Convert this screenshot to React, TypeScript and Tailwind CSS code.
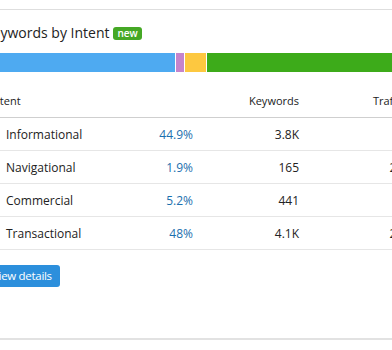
import React from "react";

const rows = [
  { label: "Informational", pct: "44.9%", kw: "3.8K", tr: "58" },
  { label: "Navigational", pct: "1.9%", kw: "165", tr: "217" },
  { label: "Commercial", pct: "5.2%", kw: "441", tr: "96" },
  { label: "Transactional", pct: "48%", kw: "4.1K", tr: "248" },
];

export default function App() {
  return (
    <div
      className="w-[392px] h-[350px] overflow-hidden bg-white pt-[9px] text-[#222]"
      style={{ fontFamily: '"Open Sans", "Noto Sans", sans-serif' }}
    >
      <div className="ml-[-40px] w-[470px] border-t border-[#dedede] border-b-2 border-b-[#e2e2e2] pl-[24px] pr-[20px] pt-[13px] pb-[51px]">
        <div className="flex items-center h-[20px]">
          <span className="text-[14px] leading-[20px] font-medium">Keywords by Intent</span>
          <span className="ml-[4px] h-[13px] px-[4px] rounded-[3px] bg-[#45a825] text-white text-[10px] leading-[13px] font-semibold">
            new
          </span>
        </div>
        <div className="mt-[10px] h-[19px] flex gap-[1px] w-[425px]">
          <div className="w-[191px] bg-[#4eaaf1]" />
          <div className="w-[8px] bg-[#c584cc]" />
          <div className="w-[21px] bg-[#fdc840]" />
          <div className="flex-1 bg-[#3dab1a]" />
        </div>
        <div className="mt-[13px] w-[426px]">
          <div className="grid grid-cols-[150px_59px_106px_111px] h-[33px] items-center border-b border-[#cfcfcf] text-[11px]">
            <div className="pl-[6px]">Intent</div>
            <div />
            <div className="text-right">Keywords</div>
            <div className="text-right pr-[5px]">Traffic</div>
          </div>
          {rows.map((r) => (
            <div
              key={r.label}
              className="grid grid-cols-[150px_59px_106px_111px] h-[33px] pt-[1px] items-center border-b border-[#e6e6e6] text-[12px]"
            >
              <div className="pl-[22px]">{r.label}</div>
              <div className="text-right text-[#1b6fae]">{r.pct}</div>
              <div className="text-right">{r.kw}</div>
              <div className="text-right">{r.tr}</div>
            </div>
          ))}
        </div>
        <button className="mt-[15px] h-[22px] px-[8px] rounded-[3px] bg-[#2c8fdc] text-white text-[11.5px] tracking-[-0.3px] font-medium leading-[22px]">
          View details
        </button>
      </div>
    </div>
  );
}
